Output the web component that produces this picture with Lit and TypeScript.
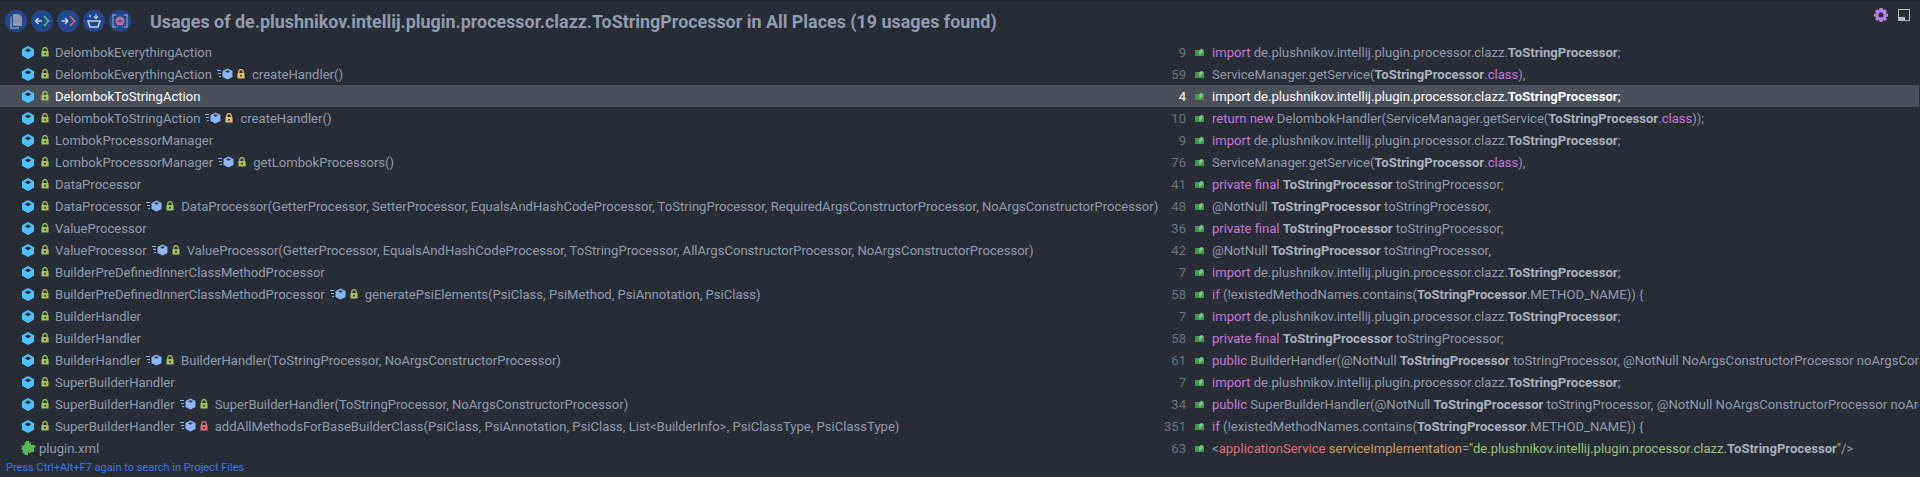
import { LitElement, html, css, svg, TemplateResult } from 'lit';
import { customElement } from 'lit/decorators.js';

const cube = html`<svg class="i cube" width="12" height="13" viewBox="0 0 13 14">
  <path d="M6.5 0L13 3.5V10.5L6.5 14L0 10.5V3.5Z" fill="#4fc1ff"/>
  <path d="M6.5 2.6L10 4.6L6.5 6.6L3 4.6Z" fill="#1d2430"/>
</svg>`;

const lock = (color: string) => html`<svg class="i lock" width="8" height="10" viewBox="0 0 9 11">
  <path d="M2 5V3a2.5 2.5 0 0 1 5 0V5" fill="none" stroke="${color}" stroke-width="1.4"/>
  <rect x="0.5" y="4.5" width="8" height="6" rx="0.6" fill="${color}"/>
  <rect x="3.6" y="6.5" width="1.8" height="2" fill="#282c34"/>
</svg>`;

const method = html`<svg class="i method" width="16" height="12" viewBox="0 0 16 12">
  <path d="M0 2.5H4M1 5.5H4M2 8.5H4" stroke="#8fb4f5" stroke-width="1.2"/>
  <path d="M10.5 0.5L15.5 3V9L10.5 11.5L5.5 9V3Z" fill="#8fb4f5"/>
  <path d="M10.5 2L13 3.4L10.5 4.8L8 3.4Z" fill="#33415a"/>
</svg>`;

const book = html`<svg class="i book" width="9" height="7" viewBox="0 0 9 7">
  <rect x="0" y="1" width="9" height="6" fill="#3f9b4d"/>
  <rect x="4.5" y="1" width="1" height="5" fill="#a5d6a7"/>
  <rect x="5.5" y="0" width="2" height="4" fill="#8ecb90"/>
</svg>`;

const puzzle = html`<svg class="i" width="15" height="14" viewBox="0 0 15 14">
  <path d="M5 0H8V2L10 1V4H13L15 5.5L13 7.5V11H10L8.5 12.5L7 11V14H4L3 12H1L2 9.5L0 8L1.5 6.5L0 4.5H3Z" fill="#5cb85c"/>
</svg>`;

const kw = (t: string) => html`<span class="kw">${t}</span>`;
const b = (t: string) => html`<b>${t}</b>`;
const imp = html`${kw('import')} de.plushnikov.intellij.plugin.processor.clazz.${b('ToStringProcessor')};`;
const field = html`${kw('private final')} ${b('ToStringProcessor')} toStringProcessor;`;
const notNull = html`@NotNull ${b('ToStringProcessor')} toStringProcessor,`;
const getService = html`ServiceManager.getService(${b('ToStringProcessor')}.${kw('class')}),`;
const ifLine = html`${kw('if')} (!existedMethodNames.contains(${b('ToStringProcessor')}.METHOD_NAME)) {`;

interface Row {
  cls: string;
  lock?: string;
  member?: string;
  line: number;
  code: TemplateResult;
  selected?: boolean;
  plugin?: boolean;
}

const G = '#a5c261';
const Y = '#e5c07b';
const R = '#e06c75';

const rows: Row[] = [
  { cls: 'DelombokEverythingAction', line: 9, code: imp },
  { cls: 'DelombokEverythingAction', lock: Y, member: 'createHandler()', line: 59, code: getService },
  { cls: 'DelombokToStringAction', line: 4, code: imp, selected: true },
  { cls: 'DelombokToStringAction', lock: Y, member: 'createHandler()', line: 10, code: html`${kw('return new')} DelombokHandler(ServiceManager.getService(${b('ToStringProcessor')}.${kw('class')}));` },
  { cls: 'LombokProcessorManager', line: 9, code: imp },
  { cls: 'LombokProcessorManager', lock: G, member: 'getLombokProcessors()', line: 76, code: getService },
  { cls: 'DataProcessor', line: 41, code: field },
  { cls: 'DataProcessor', lock: G, member: 'DataProcessor(GetterProcessor, SetterProcessor, EqualsAndHashCodeProcessor, ToStringProcessor, RequiredArgsConstructorProcessor, NoArgsConstructorProcessor)', line: 48, code: notNull },
  { cls: 'ValueProcessor', line: 36, code: field },
  { cls: 'ValueProcessor', lock: G, member: 'ValueProcessor(GetterProcessor, EqualsAndHashCodeProcessor, ToStringProcessor, AllArgsConstructorProcessor, NoArgsConstructorProcessor)', line: 42, code: notNull },
  { cls: 'BuilderPreDefinedInnerClassMethodProcessor', line: 7, code: imp },
  { cls: 'BuilderPreDefinedInnerClassMethodProcessor', lock: G, member: 'generatePsiElements(PsiClass, PsiMethod, PsiAnnotation, PsiClass)', line: 58, code: ifLine },
  { cls: 'BuilderHandler', line: 7, code: imp },
  { cls: 'BuilderHandler', line: 58, code: field },
  { cls: 'BuilderHandler', lock: G, member: 'BuilderHandler(ToStringProcessor, NoArgsConstructorProcessor)', line: 61, code: html`${kw('public')} BuilderHandler(@NotNull ${b('ToStringProcessor')} toStringProcessor, @NotNull NoArgsConstructorProcessor noArgsConstructorProcessor) {` },
  { cls: 'SuperBuilderHandler', line: 7, code: imp },
  { cls: 'SuperBuilderHandler', lock: G, member: 'SuperBuilderHandler(ToStringProcessor, NoArgsConstructorProcessor)', line: 34, code: html`${kw('public')} SuperBuilderHandler(@NotNull ${b('ToStringProcessor')} toStringProcessor, @NotNull NoArgsConstructorProcessor noArgsConstructorProcessor) {` },
  { cls: 'SuperBuilderHandler', lock: R, member: 'addAllMethodsForBaseBuilderClass(PsiClass, PsiAnnotation, PsiClass, List<BuilderInfo>, PsiClassType, PsiClassType)', line: 351, code: ifLine },
  {
    cls: 'plugin.xml', plugin: true, line: 63,
    code: html`<span class="lt">&lt;</span><span class="tag">applicationService</span> <span class="attr">serviceImplementation</span><span class="lt">=</span><span class="str">"de.plushnikov.intellij.plugin.processor.clazz.<b>ToStringProcessor</b>"</span><span class="lt">/&gt;</span>`,
  },
];

const toolIcons = [
  svg`<path d="M8 4H14L17 7V16H8Z" fill="#8b93ad"/><path d="M6 6.5V18H14" fill="none" stroke="#8b93ad" stroke-width="1.5"/>`,
  svg`<path d="M4.5 11H11M4.5 11L7.5 8M4.5 11L7.5 14" fill="none" stroke="#c6d0e0" stroke-width="1.6"/><path d="M13 6L17.5 11L13 16" fill="none" stroke="#5fb878" stroke-width="1.8"/>`,
  svg`<path d="M4.5 11H11M11 11L8 8M11 11L8 14" fill="none" stroke="#c6d0e0" stroke-width="1.6"/><path d="M13 6L17.5 11L13 16" fill="none" stroke="#d9686e" stroke-width="1.8"/>`,
  svg`<path d="M5 11H17L15 17H7Z" fill="none" stroke="#c6d0e0" stroke-width="1.6"/><path d="M13 4V8M11 6.5L13 8.5L15 6.5" fill="none" stroke="#c6d0e0" stroke-width="1.2"/><circle cx="7" cy="6" r="1" fill="#c6d0e0"/>`,
  svg`<path d="M7 5H4V17H7M15 5H18V17H15" fill="none" stroke="#8b93ad" stroke-width="1.4"/><circle cx="11" cy="11" r="4.5" fill="#b06fa8"/><rect x="8.8" y="10" width="4.4" height="2" fill="#6d4a7c"/>`,
];

@customElement('app-root')
export class AppRoot extends LitElement {
  static styles = css`
    :host {
      display: block;
      height: 477px;
      overflow: hidden;
      background: #282c34;
      border-top: 1px solid #21252b;
      box-sizing: border-box;
      font-family: Roboto, 'Noto Sans', sans-serif;
      font-size: 13.08px;
      color: #929caf;
    }

    .head {
      height: 40px;
      display: flex;
      align-items: center;
      padding: 0 10px 0 5px;
      gap: 4px;
    }
    .tool {
      width: 22px;
      height: 22px;
      border-radius: 50%;
      background: #21488f;
      flex: none;
    }
    .title {
      margin-left: 15px;
      font-size: 17.9px;
      font-weight: 700;
      color: #929caf;
      flex: 1;
      white-space: nowrap;
    }
    .actions {
      display: flex;
      align-items: center;
      gap: 10px;
      margin-top: -12px;
    }

    .row {
      display: flex;
      align-items: center;
      height: 22px;
      margin-right: 1px;
      white-space: nowrap;
    }
    .row.sel {
      background: #4b4f59;
      color: #fff;
    }
    .row.sel b, .row.sel .kw { color: #fff; }

    .usage {
      flex: 0 0 1160px;
      display: flex;
      align-items: center;
      padding-left: 22px;
      box-sizing: border-box;
      overflow: hidden;
    }
    .usage.plugin { padding-left: 21px; }
    .i { flex: none; display: block; }
    .cube { margin-right: 7px; }
    .lock { margin-right: 6px; }
    .method { margin: 0 4px 0 5px; }
    .member { margin-left: 1px; }
    .plugin .i { margin-right: 3px; }

    .num {
      flex: 0 0 26px;
      text-align: right;
      color: #6b727e;
    }
    .sel .num { color: #fff; }
    .book { margin: 0 8px 0 9px; }
    .code {
      flex: 1;
      min-width: 0;
      overflow: hidden;
      white-space: pre;
    }
    b { font-weight: 700; color: #abb2bf; }
    .kw { color: #c678dd; }
    .lt { color: #98a2b3; }
    .tag { color: #e06c75; }
    .attr { color: #d19a66; }
    .str { color: #98c379; }

    .hint {
      padding-left: 6px;
      height: 18px;
      line-height: 18px;
      font-size: 11px;
      color: #3b78e7;
    }
  `;

  renderRow(r: Row) {
    return html`
      <div class="row ${r.selected ? 'sel' : ''}">
        <div class="usage ${r.plugin ? 'plugin' : ''}">
          ${r.plugin ? puzzle : html`${cube}${lock(G)}`}
          <span>${r.cls}</span>
          ${r.member ? html`${method}${lock(r.lock!)}<span class="member">${r.member}</span>` : ''}
        </div>
        <span class="num">${r.line}</span>
        ${book}
        <span class="code">${r.code}</span>
      </div>
    `;
  }

  render() {
    return html`
      <div class="head">
        ${toolIcons.map((p) => html`<svg class="tool" viewBox="0 0 22 22">${p}</svg>`)}
        <div class="title">Usages of de.plushnikov.intellij.plugin.processor.clazz.ToStringProcessor in All Places (19 usages found)</div>
        <div class="actions">
          <svg width="14" height="14" viewBox="0 0 14 14">
            <path fill-rule="evenodd" fill="#b483e0" d="M5.5 0H8.5L9 2L11 1.2L13 3.5L11.7 5.2L14 6V8.5L11.7 9L13 11L11 13L9 11.8L8.5 14H5.5L5 11.8L3 13L1 11L2.3 9L0 8.5V6L2.3 5.2L1 3.5L3 1.2L5 2ZM7 4.5A2.5 2.5 0 1 0 7 9.5A2.5 2.5 0 1 0 7 4.5Z"/>
          </svg>
          <svg width="12" height="12" viewBox="0 0 12 12">
            <rect x="0.5" y="0.5" width="11" height="11" fill="none" stroke="#b8bcc4"/>
            <rect x="1" y="8" width="6" height="3.5" fill="#b8bcc4"/>
          </svg>
        </div>
      </div>
      ${rows.map((r) => this.renderRow(r))}
      <div class="hint">Press Ctrl+Alt+F7 again to search in Project Files</div>
    `;
  }
}
